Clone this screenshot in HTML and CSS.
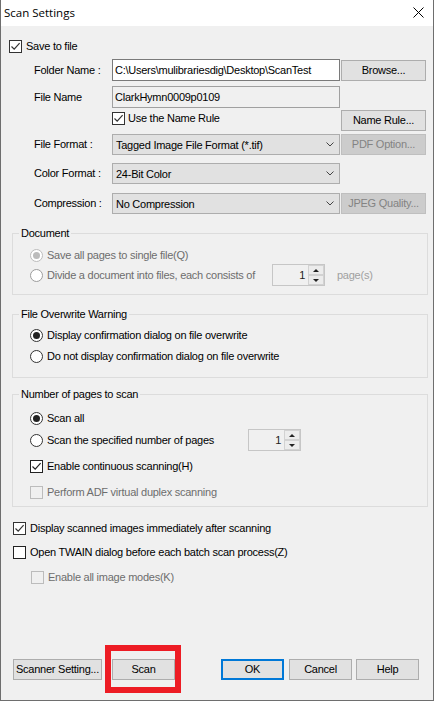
FILE: index.html
```html
<!DOCTYPE html>
<html>
<head>
<meta charset="utf-8">
<title>Scan Settings</title>
<link rel="stylesheet" href="styles.css">
</head>
<body>
<div class="window">
  <div class="titlebar">
    <span class="title">Scan Settings</span>
    <svg class="close" width="11" height="11" viewBox="0 0 11 11"><path d="M0.5 0.5L10.5 10.5M10.5 0.5L0.5 10.5" stroke="#000" stroke-width="1" fill="none"/></svg>
  </div>
  <div class="client">
    <div class="row r-save">
      <span class="chk"><svg width="11" height="11" viewBox="0 0 11 11"><path d="M1.5 5.5L4.2 8.2L9.6 2.2" stroke="#333" stroke-width="1.2" fill="none"/></svg></span>
      <span>Save to file</span>
    </div>

    <div class="row field r-folder">
      <span class="flabel">Folder Name :</span>
      <div class="textbox">C:\Users\mulibrariesdig\Desktop\ScanTest</div>
      <span class="btn side">Browse...</span>
    </div>

    <div class="row field r-file">
      <span class="flabel">File Name</span>
      <div class="textbox ro">ClarkHymn0009p0109</div>
    </div>

    <div class="row field r-rule">
      <span class="flabel"></span>
      <div class="rulechk">
        <span class="chk"><svg width="11" height="11" viewBox="0 0 11 11"><path d="M1.5 5.5L4.2 8.2L9.6 2.2" stroke="#333" stroke-width="1.2" fill="none"/></svg></span>
        <span>Use the Name Rule</span>
      </div>
      <span class="btn side">Name Rule...</span>
    </div>

    <div class="row field r-format">
      <span class="flabel">File Format :</span>
      <div class="combo"><span>Tagged Image File Format (*.tif)</span><svg class="chev" width="8" height="5" viewBox="0 0 8 5"><path d="M0.5 0.5L4 4L7.5 0.5" stroke="#444" stroke-width="1" fill="none"/></svg></div>
      <span class="btn side dis">PDF Option...</span>
    </div>

    <div class="row field r-color">
      <span class="flabel">Color Format :</span>
      <div class="combo"><span>24-Bit Color</span><svg class="chev" width="8" height="5" viewBox="0 0 8 5"><path d="M0.5 0.5L4 4L7.5 0.5" stroke="#444" stroke-width="1" fill="none"/></svg></div>
    </div>

    <div class="row field r-compress">
      <span class="flabel">Compression :</span>
      <div class="combo"><span>No Compression</span><svg class="chev" width="8" height="5" viewBox="0 0 8 5"><path d="M0.5 0.5L4 4L7.5 0.5" stroke="#444" stroke-width="1" fill="none"/></svg></div>
      <span class="btn side dis">JPEG Quality...</span>
    </div>

    <div class="group g-doc">
      <div class="legend">Document</div>
      <div class="row opt doc-r1 dim">
        <span class="radio dis on"></span><span>Save all pages to single file(Q)</span>
      </div>
      <div class="row opt doc-r2 dim">
        <div class="optlabel w-doc"><span class="radio dis2"></span><span>Divide a document into files, each consists of</span></div>
        <div class="spin"><span class="spin-val">1</span><span class="spin-btns"><span class="up"></span><span class="down"></span></span></div>
        <span class="pages">page(s)</span>
      </div>
    </div>

    <div class="group g-over">
      <div class="legend">File Overwrite Warning</div>
      <div class="row opt over-r1"><span class="radio on"></span><span>Display confirmation dialog on file overwrite</span></div>
      <div class="row opt over-r2"><span class="radio"></span><span>Do not display confirmation dialog on file overwrite</span></div>
    </div>

    <div class="group g-pages">
      <div class="legend">Number of pages to scan</div>
      <div class="row opt pg-r1"><span class="radio on"></span><span>Scan all</span></div>
      <div class="row opt pg-r2">
        <div class="optlabel w-pages"><span class="radio"></span><span>Scan the specified number of pages</span></div>
        <div class="spin"><span class="spin-val">1</span><span class="spin-btns"><span class="up"></span><span class="down"></span></span></div>
      </div>
      <div class="row opt pg-r3">
        <span class="chk dark"><svg width="11" height="11" viewBox="0 0 11 11"><path d="M1.5 5.5L4.2 8.2L9.6 2.2" stroke="#222" stroke-width="1.2" fill="none"/></svg></span>
        <span>Enable continuous scanning(H)</span>
      </div>
      <div class="row opt pg-r4 dim"><span class="chk dis"></span><span>Perform ADF virtual duplex scanning</span></div>
    </div>

    <div class="row r-display">
      <span class="chk"><svg width="11" height="11" viewBox="0 0 11 11"><path d="M1.5 5.5L4.2 8.2L9.6 2.2" stroke="#333" stroke-width="1.2" fill="none"/></svg></span>
      <span>Display scanned images immediately after scanning</span>
    </div>
    <div class="row r-twain">
      <span class="chk dark"></span>
      <span>Open TWAIN dialog before each batch scan process(Z)</span>
    </div>
    <div class="row r-modes dim">
      <span class="chk dis"></span>
      <span>Enable all image modes(K)</span>
    </div>

    <div class="row btnrow">
      <span class="btn b-scanner">Scanner Setting...</span>
      <span class="btn b-scan">Scan</span>
      <span class="btn b-ok">OK</span>
      <span class="btn b-cancel">Cancel</span>
      <span class="btn b-help">Help</span>
    </div>
  </div>
  <div class="callout"></div>
</div>
</body>
</html>
```

FILE: styles.css
```css
* { box-sizing: border-box; }
html, body { margin: 0; padding: 0; background: #f0f0f0; }
body {
  font-family: "Liberation Sans", Arial, sans-serif;
  font-size: 11px;
  color: #000;
  letter-spacing: -0.25px;
}
.window {
  width: 434px;
  height: 701px;
  border: 1px solid #6e6e6e;
  border-top: none;
  background: #f0f0f0;
  position: relative;
}
.titlebar {
  height: 26px;
  background: #fff;
  display: flex;
  align-items: center;
  justify-content: space-between;
  padding: 0 9px 0 3px;
}
.title {
  font-family: "Open Sans", "Liberation Sans", sans-serif;
  font-size: 11.5px;
  letter-spacing: 0;
  margin-top: -1px;
}
.close { display: block; margin-top: -1px; }

.client { display: flex; flex-direction: column; }
.row { display: flex; align-items: center; white-space: nowrap; }
.row > span { line-height: 13px; }

/* checkbox */
.chk {
  width: 13px; height: 13px;
  border: 1px solid #333;
  background: #fff;
  display: inline-flex;
  flex: none;
}
.chk svg { display: block; }
.chk.dark { border-color: #222; }
.chk.dis { border-color: #bcbcbc; background: #f0f0f0; }

/* radio */
.radio {
  width: 13px; height: 13px;
  border: 1px solid #333;
  border-radius: 50%;
  background: #fff;
  flex: none;
  display: inline-flex;
  align-items: center;
  justify-content: center;
}
.radio.on::after {
  content: "";
  width: 7px; height: 7px;
  border-radius: 50%;
  background: #222;
}
.radio.dis { border-color: #bcbcbc; }
.radio.dis.on::after { background: #bcbcbc; }
.radio.dis2 { border-color: #9c9c9c; }

.dim { color: #6d6d6d; }

/* top area */
.r-save { margin-top: 13px; height: 15px; padding-left: 8px; gap: 4px; }
.field { padding-left: 33px; }
.flabel { width: 78px; flex: none; }
.r-folder { margin-top: 5px; height: 22px; }
.r-file { margin-top: 5px; height: 22px; }
.r-rule { margin-top: 2px; height: 21px; align-items: flex-start; }
.r-rule .flabel { height: 21px; }
.r-format { margin-top: 3px; height: 21px; }
.r-color { margin-top: 8px; height: 21px; }
.r-compress { margin-top: 9px; height: 21px; }

.textbox {
  width: 228px; height: 22px;
  border: 1px solid #7a7a7a;
  background: #fff;
  padding-left: 2px;
  line-height: 20px;
  flex: none;
}
.textbox.ro { background: #f0f0f0; border-color: #a0a0a0; }

.rulechk {
  width: 228px; flex: none;
  display: flex; align-items: center; gap: 3px;
  margin-top: 2px; height: 13px;
}
.rulechk span { line-height: 13px; }
.r-rule .side { align-self: flex-start; }

.combo {
  width: 228px; height: 21px;
  border: 1px solid #adadad;
  background: #e1e1e1;
  display: flex; align-items: center; justify-content: space-between;
  padding: 0 5px 0 3px;
  flex: none;
}
.chev { display: block; }

.btn {
  height: 21px;
  border: 1px solid #adadad;
  background: #e1e1e1;
  display: inline-flex;
  align-items: center;
  justify-content: center;
  flex: none;
  white-space: nowrap;
}
.side { width: 85px; margin-left: 1px; }
.btn.dis { background: #cccccc; border-color: #bfbfbf; color: #838383; }

/* group boxes */
.group {
  margin-left: 11px;
  width: 416px;
  border: 1px solid #dcdcdc;
}
.legend {
  width: fit-content;
  height: 13px;
  line-height: 13px;
  margin: -7px 0 0 6px;
  padding: 0 2px;
  background: #f0f0f0;
}
.opt { padding-left: 17px; gap: 4px; }
.optlabel { display: flex; align-items: center; gap: 4px; flex: none; }
.optlabel span { line-height: 13px; }
.w-doc { width: 242px; }
.w-pages { width: 218px; }

.g-doc { margin-top: 19px; padding-bottom: 8px; }
.doc-r1 { margin-top: 6px; height: 18px; }
.doc-r2 { height: 22px; }
.doc-r2 .spin { margin-left: -4px; }
.pages { margin-left: 8px; color: #a0a0a0; }

.g-over { margin-top: 19px; padding-bottom: 10px; }
.over-r1 { margin-top: 4px; height: 21px; }
.over-r2 { height: 21px; }

.g-pages { margin-top: 16px; padding-bottom: 3px; }
.pg-r1 { margin-top: 7px; height: 21px; }
.pg-r2 { height: 22px; }
.pg-r2 .spin { margin-left: -4px; }
.pg-r3 { margin-top: 5px; height: 21px; }
.pg-r4 { margin-top: 5px; height: 21px; }

.spin {
  display: flex;
  width: 53px; height: 22px;
  border: 1px solid #c6c6c6;
  background: #f0f0f0;
  flex: none;
}
.spin-val {
  flex: 1;
  text-align: right;
  padding-right: 3px;
  line-height: 20px;
  color: #222;
}
.spin-btns { width: 16px; display: flex; flex-direction: column; }
.spin-btns span {
  flex: 1;
  background: #ececec;
  border: 1px solid #d2d2d2;
  display: flex; align-items: center; justify-content: center;
}
.spin-btns .up::after {
  content: "";
  border-left: 3px solid transparent;
  border-right: 3px solid transparent;
  border-bottom: 3px solid #222;
}
.spin-btns .down::after {
  content: "";
  border-left: 3px solid transparent;
  border-right: 3px solid transparent;
  border-top: 3px solid #222;
}

/* bottom options */
.r-display { margin-top: 11px; height: 21px; padding-left: 12px; gap: 4px; }
.r-twain { margin-top: 3px; height: 21px; padding-left: 12px; gap: 4px; }
.r-modes { margin-top: 4px; height: 21px; padding-left: 30px; gap: 4px; }

/* button row */
.btnrow { margin-top: 71px; height: 21px; }
.b-scanner { width: 89px; margin-left: 12px; }
.b-scan { width: 63px; margin-left: 10px; }
.b-ok { width: 63px; margin-left: 46px; border: 2px solid #0078d7; }
.b-cancel { width: 63px; margin-left: 5px; }
.b-help { width: 63px; margin-left: 4px; }

/* red annotation drawn over the dialog */
.callout {
  position: absolute;
  left: 104px;
  top: 645px;
  width: 76px;
  height: 48px;
  border: 6px solid #ed1c24;
}
```
